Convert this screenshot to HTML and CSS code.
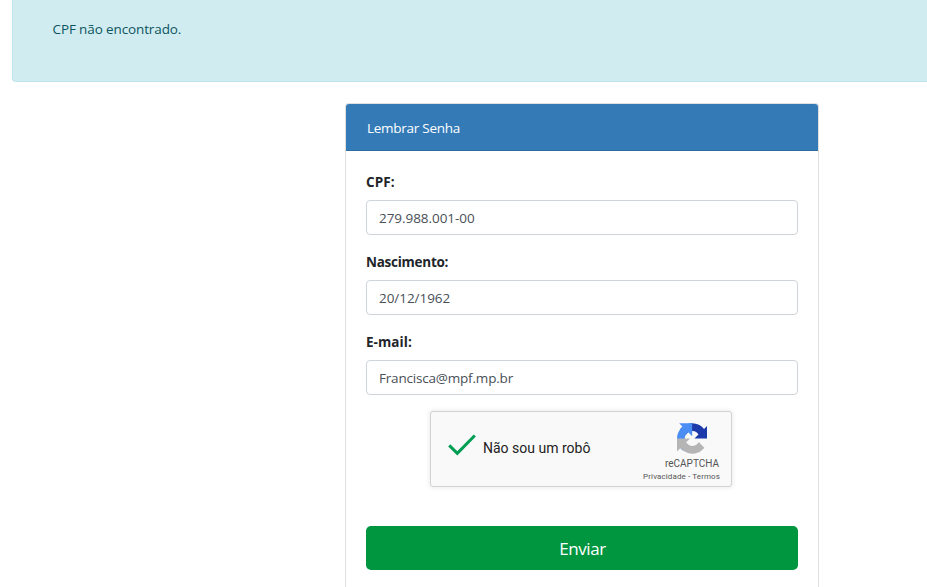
FILE: index.html
```html
<!DOCTYPE html>
<html lang="pt-BR">
<head>
<meta charset="utf-8">
<title>Lembrar Senha</title>
<link rel="stylesheet" href="styles.css">
</head>
<body>
<div class="alert">CPF não encontrado.</div>
<main class="card">
  <header class="card-header">Lembrar Senha</header>
  <form class="card-body">
    <div class="field"><label class="short">CPF:</label><div class="control numeric">279.988.001-00</div></div>
    <div class="field"><label>Nascimento:</label><div class="control numeric">20/12/1962</div></div>
    <div class="field"><label class="short">E-mail:</label><div class="control">Francisca@mpf.mp.br</div></div>
    <div class="captcha">
      <svg class="check" viewBox="0 0 28 22"><path d="M1.2 11.4L9.3 19.3L26.8 1.5" fill="none" stroke="#009e55" stroke-width="3"/></svg>
      <span class="captcha-text">Não sou um robô</span>
      <div class="brand">
        <svg class="logo" viewBox="0 0 64 64"><path d="M64 31.955l-.033-1.37V4.687l-7.16 7.16C50.948 4.674 42.033.093 32.05.093c-10.4 0-19.622 4.96-25.458 12.64l11.736 11.86a15.55 15.55 0 0 1 4.754-5.334c2.05-1.6 4.952-2.906 8.968-2.906.485 0 .86.057 1.135.163 4.976.393 9.288 3.14 11.828 7.124l-8.307 8.307L64 31.953" fill="#1c3aa9"/><path d="M31.862.094l-1.37.033H4.594l7.16 7.16C4.58 13.147 0 22.06 0 32.046c0 10.4 4.96 19.622 12.64 25.458L24.5 45.768a15.55 15.55 0 0 1-5.334-4.754c-1.6-2.05-2.906-4.952-2.906-8.968 0-.485.057-.86.163-1.135.393-4.976 3.14-9.288 7.124-11.828l8.307 8.307L31.86.095" fill="#4a8df5"/><path d="M.001 32.045l.033 1.37v25.898l7.16-7.16c5.86 7.173 14.774 11.754 24.76 11.754 10.4 0 19.622-4.96 25.458-12.64l-11.736-11.86a15.55 15.55 0 0 1-4.754 5.334c-2.05 1.6-4.952 2.906-8.968 2.906-.485 0-.86-.057-1.135-.163-4.976-.393-9.288-3.14-11.828-7.124l8.307-8.307c-10.522.04-22.4.066-27.295-.005" fill="#b5b5b5"/></svg>
        <span class="name">reCAPTCHA</span>
        <span class="links">Privacidade - Termos</span>
      </div>
    </div>
    <button type="button" class="submit">Enviar</button>
  </form>
</main>
</body>
</html>
```
FILE: styles.css
```css
* { box-sizing: border-box; }
html { height: 100%; overflow: hidden; }
body { display: flex; flex-direction: column; height: 100%; margin: 0; overflow: hidden; background: #fff; color: #212529; font: 13.5px/21px "Open Sans", "Noto Sans", sans-serif; }
.alert { flex: none; height: 82px; margin-left: 12px; padding: 19px 40px 0 39.5px; background: #d1ecf0; border: 1px solid #bee5eb; border-width: 0 0 1px 1px; border-radius: 0 0 0 4px; color: #0c5460; letter-spacing: -.12px; }
.card { flex: 1; width: 474px; margin: 21px 0 0 345px; border: 1px solid #dfdfdf; border-bottom: 0; border-radius: 4px 4px 0 0; }
.card-header { height: 47px; padding: 14px 21px 12px; background: #337ab7; border-bottom: 1px solid #2e6da4; border-radius: 3px 3px 0 0; color: #fff; letter-spacing: -.26px; }
.card-body { padding: 20px 20px 0; }
.field { margin-bottom: 16px; }
.field label { display: block; height: 29px; padding-top: 1px; font-weight: 700; letter-spacing: -.26px; }
.field label.short { letter-spacing: .06px; }
.control { height: 35px; padding: 7px 12px 5px; border: 1px solid #ced4da; border-radius: 4px; color: #495057; letter-spacing: -.19px; }
.control.numeric { letter-spacing: -.05px; }
.captcha { display: flex; width: 302px; height: 76px; margin: 0 0 39px 64px; border: 1px solid #d3d3d3; border-radius: 3px; background: #f9f9f9; box-shadow: 0 0 4px 1px rgba(0,0,0,.08); font-family: Roboto, sans-serif; }
.check { width: 28px; height: 22px; margin: 22px 0 0 17px; }
.captcha-text { margin: 26px 0 0 7px; font-size: 14px; color: #222; }
.brand { display: flex; flex-direction: column; align-items: flex-end; margin: 11px 11px 0 auto; color: #555; }
.logo { width: 30.5px; height: 31px; margin-right: 13px; }
.name { margin: 4px 1px 0 0; font-size: 10px; line-height: 12px; }
.links { margin-top: 2px; font-size: 8px; line-height: 10px; letter-spacing: .11px; }
.submit { display: block; width: 432px; height: 44px; padding: 2px 0 0 1px; border: 0; border-radius: 5px; background: #009640; color: #fff; font: 17px/26px "Open Sans", sans-serif; letter-spacing: -.45px; }
```
